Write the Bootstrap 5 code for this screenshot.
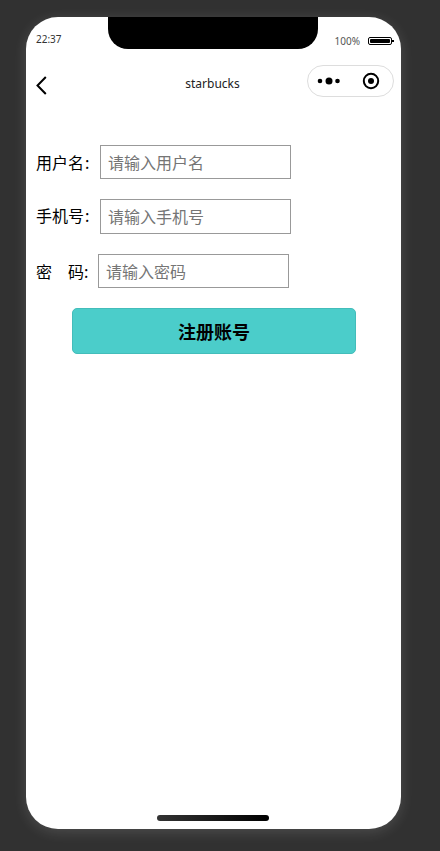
<!DOCTYPE html>
<html lang="zh">
<head>
<meta charset="utf-8">
<title>starbucks</title>
<link rel="stylesheet" href="https://cdn.jsdelivr.net/npm/bootstrap@5.3.0/dist/css/bootstrap.min.css">
<style>
html,body{height:100%;}
body{background:#313131;font-family:"Noto Sans","Noto Sans CJK SC",sans-serif;overflow:hidden;}
.phone{width:375px;height:812px;margin:17px 0 0 26px;background:#fff;border-radius:32px;box-shadow:0 3px 14px rgba(255,255,255,.14);position:relative;overflow:hidden;}
.notch{position:absolute;left:82px;top:0;width:210px;height:32px;background:#000;border-radius:0 0 20px 20px;}
.statusbar{height:46px;padding:13px 9px 0 10px;font-size:10px;line-height:18px;color:#333;}
.stat-right{height:22px;color:#555;}
.batt{width:24px;height:8px;border:1px solid #000;border-radius:2px;padding:1px;position:relative;display:block;}
.batt i{display:block;height:100%;background:#000;border-radius:1px;}
.batt::after{content:"";position:absolute;right:-3px;top:2px;width:2px;height:2px;background:#000;}
.titlebar{height:42px;padding:0 7px 0 10px;position:relative;}
.chev{margin-top:13px;}
.ttl{font-size:12px;color:#222;position:absolute;left:0;right:0;top:12px;text-align:center;line-height:18px;padding-right:2px;}
.capsule{width:87px;height:32px;margin-top:2px;border:1px solid #ddd;border-radius:16px;padding:0 13px 0 9px;position:relative;background:#fff;}
.formwrap{padding:40px 0 0 10px;}
.frow{height:34px;margin-bottom:20px;font-size:16px;color:#000;}
.frow.tall{height:35px;}
.frow.tall .inp{padding-bottom:2px;}
.frow.tall .lbl{line-height:32px;align-self:flex-start;}
.lbl{white-space:pre;line-height:34px;font-family:"Noto Sans CJK SC",sans-serif;}
.cln{margin-left:1px;}
.lblw{width:64px;flex:none;}
.lblw.short{width:62px;}
.lblw.short .cln{margin-left:0;}
.inp{width:191px;height:100%;border:1px solid #999;padding:0 7px;font-size:16px;font-family:"Noto Sans CJK SC",sans-serif;border-radius:0;outline:0;}
.inp::placeholder{color:#757575;opacity:1;}
.regbtn{display:block;width:284px;height:46px;margin-left:36px;background:#4bcdca;border:1px solid #43bdba;border-radius:5px;color:#000;font-weight:700;font-size:18px;font-family:"Noto Sans CJK SC",sans-serif;padding:0;}
.homebar{position:absolute;left:131px;bottom:8px;width:112px;height:6px;border-radius:3px;background:linear-gradient(90deg,#333,#000);}
</style>
</head>
<body>
<div class="phone">
  <div class="notch"></div>
  <div class="statusbar d-flex justify-content-between">
    <span>22:37</span>
    <span class="stat-right d-flex align-items-center align-self-start gap-2"><span>100%</span><span class="batt"><i></i></span></span>
  </div>
  <div class="titlebar d-flex justify-content-between align-items-start">
    <svg class="chev" width="12" height="20" viewBox="0 0 12 20" fill="none" stroke="#000" stroke-width="2"><path d="M9.800 1 1.500 9.500 9.800 18"/></svg>
    <div class="ttl">starbucks</div>
    <div class="capsule d-flex justify-content-between align-items-center">
      <svg width="24" height="8" viewBox="0 0 24 8" fill="#000"><circle cx="3" cy="4" r="2.300"/><circle cx="12" cy="4" r="3.500"/><circle cx="20.500" cy="4" r="2.300"/></svg>
      <svg width="18" height="18" viewBox="0 0 18 18"><circle cx="9" cy="9" r="7.200" fill="none" stroke="#000" stroke-width="2"/><circle cx="9" cy="9" r="3" fill="#000"/></svg>
    </div>
  </div>
  <form class="formwrap">
    <div class="frow d-flex align-items-center"><span class="lbl lblw">用户名<span class="cln">:</span></span><input class="inp" placeholder="请输入用户名"></div>
    <div class="frow tall d-flex align-items-center"><span class="lbl lblw">手机号<span class="cln">:</span></span><input class="inp" placeholder="请输入手机号"></div>
    <div class="frow d-flex align-items-center"><span class="lbl lblw short">密　码<span class="cln">:</span></span><input class="inp" placeholder="请输入密码"></div>
    <button type="button" class="regbtn">注册账号</button>
  </form>
  <div class="homebar"></div>
</div>
<script src="https://cdn.jsdelivr.net/npm/bootstrap@5.3.0/dist/js/bootstrap.bundle.min.js"></script>
</body>
</html>
